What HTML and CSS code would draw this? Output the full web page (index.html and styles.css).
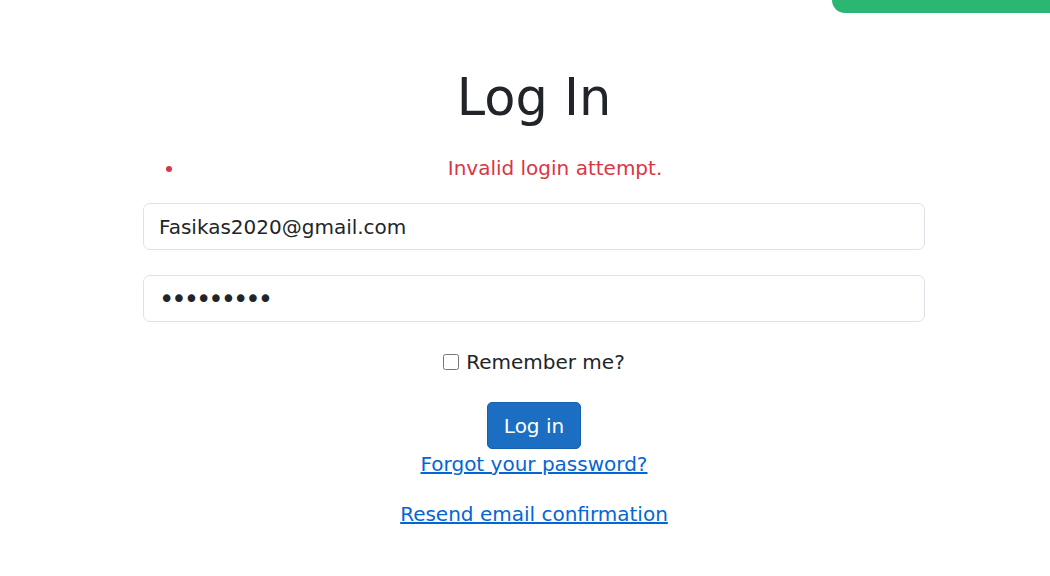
FILE: index.html
```html
<!DOCTYPE html>
<html lang="en">
<head>
  <meta charset="UTF-8" />
  <meta name="viewport" content="width=device-width, initial-scale=1.0" />
  <title>Log In</title>
  <link rel="stylesheet" href="styles.css">
</head>
<body>
  <div class="corner-tab"></div>

  <main class="login">
    <h1 class="login-title">Log In</h1>

    <ul class="errors">
      <li>Invalid login attempt.</li>
    </ul>

    <form class="login-form">
      <input class="field" type="email" value="Fasikas2020@gmail.com" />
      <input class="field pass" type="password" value="123456789" />

      <label class="remember">
        <input type="checkbox" class="check" />
        Remember me?
      </label>

      <div class="actions">
        <button type="button" class="btn">Log in</button>
        <a href="#" class="link">Forgot your password?</a>
      </div>

      <a href="#" class="link resend">Resend email confirmation</a>
    </form>
  </main>
</body>
</html>
```

FILE: styles.css
```css
body {
  margin: 0;
  padding: 0;
  background: #ffffff;
  font-family: 'DejaVu Sans', sans-serif;
  color: #212529;
  font-size: 20px;
}

/* green decoration in the top right */
.corner-tab {
  position: absolute;
  top: 0;
  right: 0;
  width: 218px;
  height: 13px;
  background: #2cb673;
  border-bottom-left-radius: 26px;
}

.login {
  width: 782px;
  margin-left: 143px;
  padding-top: 68px;
  text-align: center;
}

.login-title {
  margin: 0;
  font-size: 51px;
  font-weight: 400;
  line-height: 60px;
}

.errors {
  margin: 26px 0 0 0;
  padding-left: 42px;
  color: #dc3545;
  font-size: 20px;
  line-height: 28px;
}

.login-form {
  margin-top: 21px;
  display: flex;
  flex-direction: column;
  align-items: center;
}

.field {
  box-sizing: border-box;
  width: 100%;
  height: 47px;
  margin-bottom: 25px;
  padding: 8px 15px;
  border: 1px solid #dee2e6;
  border-radius: 7px;
  font-family: inherit;
  font-size: 20px;
  color: #212529;
  background: #fff;
}

.field.pass {
  font-size: 26px;
  letter-spacing: -3px;
}

.remember {
  display: flex;
  align-items: center;
  gap: 7px;
  font-size: 20px;
  line-height: 30px;
}

.check {
  width: 16px;
  height: 16px;
  margin: 0;
}

.actions {
  margin-top: 25px;
  display: flex;
  flex-direction: column;
  align-items: center;
}

.btn {
  box-sizing: border-box;
  height: 47px;
  padding: 0 16px;
  background: #1b6ec2;
  border: 1px solid #1861ac;
  border-radius: 5px;
  color: #fff;
  font-family: inherit;
  font-size: 20px;
}

.link {
  color: #0366d6;
  font-size: 20px;
  line-height: 30px;
}

.resend {
  margin-top: 20px;
}
```
